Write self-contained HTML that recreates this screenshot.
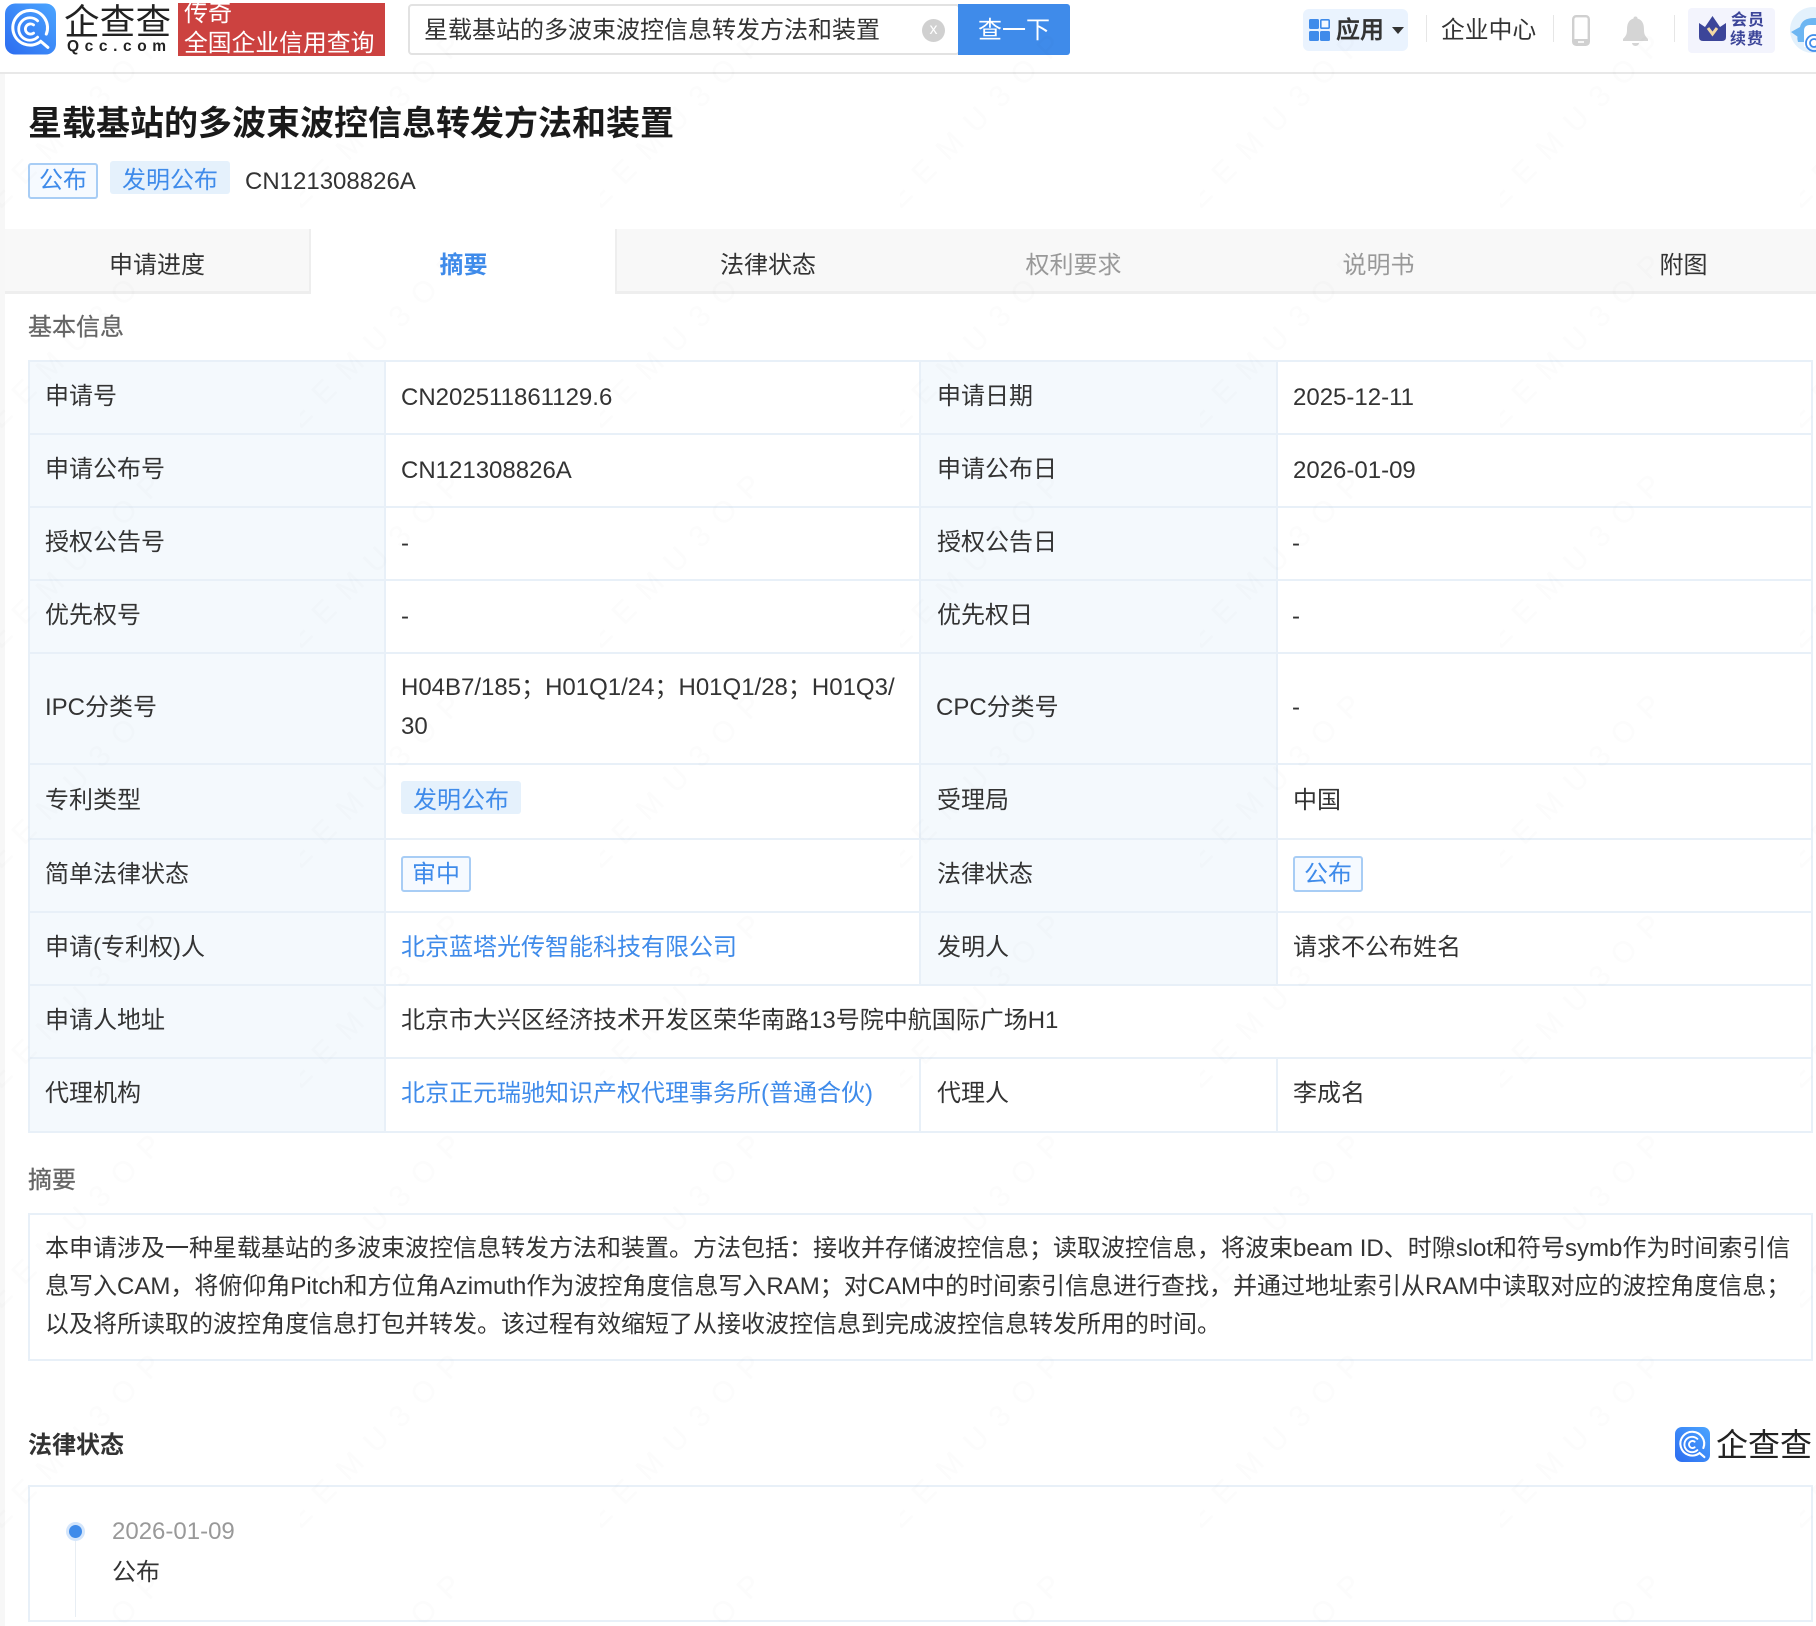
<!DOCTYPE html>
<html lang="zh"><head><meta charset="utf-8"><title>星载基站的多波束波控信息转发方法和装置</title>
<style>
html,body{margin:0;padding:0;background:#fff}
#p{position:relative;width:1816px;height:1626px;overflow:hidden;background:#fff;font-family:"Liberation Sans","Noto Sans CJK SC",sans-serif;font-size:24px;color:#333}
.t{position:absolute;white-space:nowrap;line-height:38px;height:38px}
.b{position:absolute;box-sizing:border-box}
.bl{color:#3f8bea}
.tab{position:absolute;top:229px;height:65px;width:305px;box-sizing:border-box;background:#f8f8f8;border-bottom:3px solid #eee;text-align:center;line-height:74px}
.o{position:absolute;box-sizing:border-box;background:#f6faff;border:2px solid #a8cdf5;border-radius:3px;color:#3f8bea;text-align:center;width:70px;height:36px;line-height:33px}
.f{position:absolute;box-sizing:border-box;background:#e5f1fc;border-radius:3px;color:#3f8bea;text-align:center;width:120px;height:33px;line-height:40px;overflow:visible}
</style></head><body><div id="p">

<div class="b" style="left:0;top:74px;width:5px;height:1552px;background:#f7f7f7"></div>
<div class="b" style="left:0;top:72px;width:1816px;height:2px;background:#e8e8e8"></div>

<svg class="b" style="left:5px;top:3px" width="51" height="52" viewBox="0 0 100 100">
<defs><linearGradient id="g" x1="0" y1="1" x2="1" y2="0"><stop offset="0" stop-color="#2c6cf0"/><stop offset="1" stop-color="#4ba5ff"/></linearGradient></defs>
<rect width="100" height="100" rx="20" fill="url(#g)"/>
<g fill="none" stroke="#fff" stroke-linecap="round"><path stroke-width="6" d="M68 76A34 34 0 1 1 81 60M70 74L84 86"/><path stroke-width="5.5" d="M64 66A22 22 0 1 1 64 34"/><path stroke-width="5.5" d="M56 58A10 10 0 1 1 56 42"/></g></svg>
<div class="t" style="left:64px;top:2px;font-size:35.5px;line-height:40px;height:40px;color:#222;letter-spacing:.3px">企查查</div>
<div class="t" style="left:67px;top:36px;font-size:15.5px;line-height:22px;height:22px;font-weight:bold;color:#222;letter-spacing:5.6px">Qcc.com</div>

<div class="b" style="left:178px;top:3px;width:207px;height:53px;background:#cc4240;overflow:hidden;color:#fff">
<div class="t" style="left:6px;top:-8px">传奇</div><div class="t" style="left:6px;top:22px;font-size:23.8px">全国企业信用查询</div></div>

<div class="b" style="left:408px;top:4px;width:552px;height:51px;border:2px solid #e2e2e2;border-radius:4px"></div>
<div class="t" style="left:424px;top:12px;font-size:24px">星载基站的多波束波控信息转发方法和装置</div>
<div class="b" style="left:922px;top:19px;width:23px;height:23px;border-radius:50%;background:#d0d0d0;color:#fff;text-align:center;font-size:16px;line-height:22px">x</div>
<div class="b" style="left:958px;top:4px;width:112px;height:51px;background:#3f8bea;border-radius:0 3px 3px 0;color:#fff;text-align:center;line-height:54px;font-size:24px">查一下</div>

<div class="b" style="left:1303px;top:9px;width:105px;height:42px;background:#eaf3fe;border-radius:6px"></div>
<svg class="b" style="left:1309px;top:19px" width="21" height="22" viewBox="0 0 21 22"><rect width="10" height="10" rx="1.5" fill="#3f8bea"/><rect x="11.8" y=".8" width="8.4" height="8.4" rx="1" fill="#f4f9ff" stroke="#3f8bea" stroke-width="1.6"/><rect y="12" width="10" height="10" rx="1.5" fill="#3f8bea"/><rect x="11" y="12" width="10" height="10" rx="1.5" fill="#3f8bea"/></svg>
<div class="t" style="left:1336px;top:12px;font-size:24px;font-weight:500;color:#333;-webkit-text-stroke:.4px #333">应用</div>
<div class="b" style="left:1392px;top:27px;width:0;height:0;border-left:6px solid transparent;border-right:6px solid transparent;border-top:7px solid #333"></div>
<div class="b" style="left:1426px;top:15px;width:1px;height:27px;background:#e6e6e6"></div>
<div class="t" style="left:1441px;top:12px;font-size:23.8px">企业中心</div>
<div class="b" style="left:1553px;top:15px;width:1px;height:27px;background:#e6e6e6"></div>
<svg class="b" style="left:1572px;top:15px" width="18" height="31" viewBox="0 0 18 31"><rect x="1.2" y="1.2" width="15.6" height="28.6" rx="3" fill="#fff" stroke="#d0d0d0" stroke-width="2.4"/><rect x="1" y="24" width="16" height="6" rx="2" fill="#d0d0d0"/><rect x="6" y="26.2" width="6" height="1.6" fill="#fff"/></svg>
<svg class="b" style="left:1623px;top:16px" width="25" height="30" viewBox="0 0 25 30"><path fill="#d5d5d5" d="M10.5 2.5a2 2 0 0 1 4 0C20 4 21 9 21 14c0 4 1 6 4 9v2H0v-2c3-3 4-5 4-9 0-5 1-10 6.500-11.500zM9 27h7a3.500 3 0 0 1-7 0z"/></svg>
<div class="b" style="left:1674px;top:15px;width:1px;height:27px;background:#e6e6e6"></div>
<div class="b" style="left:1688px;top:8px;width:87px;height:45px;background:#f3f4fd;border-radius:4px"></div>
<svg class="b" style="left:1699px;top:16px" width="27" height="25" viewBox="0 0 27 25"><path fill="#3c4599" d="M0 7l6 4 7.500-11 7.500 11 6-4v14q0 4-4 4H4q-4 0-4-4z"/><path fill="none" stroke="#f3d9a4" stroke-width="3" d="M9 12l4.500 6 4.500-6"/></svg>
<div class="t" style="left:1731px;top:11px;font-size:16px;line-height:20px;height:20px;font-weight:bold;color:#3c4599;letter-spacing:1px">会员</div>
<div class="t" style="left:1730px;top:30px;font-size:16px;line-height:20px;height:20px;font-weight:bold;color:#3c4599;letter-spacing:1px">续费</div>
<svg class="b" style="left:1790px;top:7px" width="26" height="46" viewBox="0 0 26 46"><circle cx="23" cy="23" r="23" fill="#e3f1fc"/><path fill="#6db6f2" d="M10 20q2-9 14-9h2v24H8q-2-6 2-15zM1 25l9-5-2 10z"/><path fill="#fff" d="M14 24q0-6 6-6h6v22H14z"/><g fill="none" stroke="#3f8bea" stroke-width="1.800"><circle cx="24" cy="36" r="4"/><circle cx="24" cy="36" r="8"/></g></svg>

<div class="t" style="left:28px;top:102px;font-size:34px;line-height:44px;height:44px;font-weight:bold;color:#1a1a1a">星载基站的多波束波控信息转发方法和装置</div>
<div class="o" style="left:28px;top:163px;line-height:32px">公布</div>
<div class="f" style="left:110px;top:161px">发明公布</div>
<div class="t" style="left:245px;top:163px">CN121308826A</div>

<div class="tab" style="left:5px;width:306px;border-right:2px solid #eee">申请进度</div>
<div class="tab bl" style="left:311px;background:#fff;border:0;font-weight:bold">摘要</div>
<div class="tab" style="left:615px;width:306px;box-shadow:inset 2px 0 0 #eee">法律状态</div>
<div class="tab" style="left:921px;color:#999">权利要求</div>
<div class="tab" style="left:1226px;color:#999">说明书</div>
<div class="tab" style="left:1531px;width:285px"><span style="position:absolute;left:0;width:305px">附图</span></div>

<div class="t" style="left:28px;top:309px;color:#666;-webkit-text-stroke:.3px #666">基本信息</div>

<!-- table -->
<div class="b" style="left:28px;top:360px;width:1785px;height:773px;border:2px solid #e8f0f8"></div>
<div class="b" style="left:30px;top:362px;width:354px;height:769px;background:#f4f9fd"></div>
<div class="b" style="left:921px;top:362px;width:355px;height:696px;background:#f4f9fd"></div>
<div class="b" style="left:384px;top:362px;width:2px;height:769px;background:#e8f0f8"></div>
<div class="b" style="left:919px;top:362px;width:2px;height:623px;background:#e8f0f8"></div>
<div class="b" style="left:919px;top:1058px;width:2px;height:73px;background:#e8f0f8"></div>
<div class="b" style="left:1276px;top:362px;width:2px;height:623px;background:#e8f0f8"></div>
<div class="b" style="left:1276px;top:1058px;width:2px;height:73px;background:#e8f0f8"></div>
<div class="b" style="left:921px;top:985px;width:355px;height:73px;background:#fff"></div>
<div class="b" style="left:30px;top:433px;width:1781px;height:2px;background:#e8f0f8"></div>
<div class="b" style="left:30px;top:506px;width:1781px;height:2px;background:#e8f0f8"></div>
<div class="b" style="left:30px;top:579px;width:1781px;height:2px;background:#e8f0f8"></div>
<div class="b" style="left:30px;top:652px;width:1781px;height:2px;background:#e8f0f8"></div>
<div class="b" style="left:30px;top:763px;width:1781px;height:2px;background:#e8f0f8"></div>
<div class="b" style="left:30px;top:838px;width:1781px;height:2px;background:#e8f0f8"></div>
<div class="b" style="left:30px;top:911px;width:1781px;height:2px;background:#e8f0f8"></div>
<div class="b" style="left:30px;top:984px;width:1781px;height:2px;background:#e8f0f8"></div>
<div class="b" style="left:30px;top:1057px;width:1781px;height:2px;background:#e8f0f8"></div>

<div class="t" style="left:45px;top:378px">申请号</div><div class="t" style="left:401px;top:379px">CN202511861129.6</div><div class="t" style="left:937px;top:378px">申请日期</div><div class="t" style="left:1293px;top:379px">2025-12-11</div>
<div class="t" style="left:45px;top:451px">申请公布号</div><div class="t" style="left:401px;top:452px">CN121308826A</div><div class="t" style="left:937px;top:451px">申请公布日</div><div class="t" style="left:1293px;top:452px">2026-01-09</div>
<div class="t" style="left:45px;top:524px">授权公告号</div><div class="t" style="left:401px;top:525px">-</div><div class="t" style="left:937px;top:524px">授权公告日</div><div class="t" style="left:1292px;top:525px">-</div>
<div class="t" style="left:45px;top:597px">优先权号</div><div class="t" style="left:401px;top:598px">-</div><div class="t" style="left:937px;top:597px">优先权日</div><div class="t" style="left:1292px;top:598px">-</div>
<div class="t" style="left:45px;top:689px">IPC分类号</div><div class="t" style="left:401px;top:669px">H04B7/185；H01Q1/24；H01Q1/28；H01Q3/</div><div class="t" style="left:401px;top:708px">30</div><div class="t" style="left:936px;top:689px">CPC分类号</div><div class="t" style="left:1292px;top:689px">-</div>
<div class="t" style="left:45px;top:782px">专利类型</div><div class="f" style="left:401px;top:781px">发明公布</div><div class="t" style="left:937px;top:782px">受理局</div><div class="t" style="left:1293px;top:782px">中国</div>
<div class="t" style="left:45px;top:856px">简单法律状态</div><div class="o" style="left:401px;top:856px">审中</div><div class="t" style="left:937px;top:856px">法律状态</div><div class="o" style="left:1293px;top:856px">公布</div>
<div class="t" style="left:45px;top:929px">申请(专利权)人</div><div class="t bl" style="left:401px;top:929px">北京蓝塔光传智能科技有限公司</div><div class="t" style="left:937px;top:929px">发明人</div><div class="t" style="left:1293px;top:929px">请求不公布姓名</div>
<div class="t" style="left:45px;top:1002px">申请人地址</div><div class="t" style="left:401px;top:1002px">北京市大兴区经济技术开发区荣华南路13号院中航国际广场H1</div>
<div class="t" style="left:45px;top:1075px">代理机构</div><div class="t bl" style="left:401px;top:1075px">北京正元瑞驰知识产权代理事务所(普通合伙)</div><div class="t" style="left:937px;top:1075px">代理人</div><div class="t" style="left:1293px;top:1075px">李成名</div>

<div class="t" style="left:28px;top:1162px;color:#666;-webkit-text-stroke:.3px #666">摘要</div>
<div class="b" style="left:28px;top:1213px;width:1785px;height:148px;border:2px solid #e8f0f8"></div>
<div class="t" style="left:45px;top:1230px">本申请涉及一种星载基站的多波束波控信息转发方法和装置。方法包括：接收并存储波控信息；读取波控信息，将波束beam ID、时隙slot和符号symb作为时间索引信</div>
<div class="t" style="left:45px;top:1268px">息写入CAM，将俯仰角Pitch和方位角Azimuth作为波控角度信息写入RAM；对CAM中的时间索引信息进行查找，并通过地址索引从RAM中读取对应的波控角度信息；</div>
<div class="t" style="left:45px;top:1306px">以及将所读取的波控角度信息打包并转发。该过程有效缩短了从接收波控信息到完成波控信息转发所用的时间。</div>

<div class="t" style="left:28px;top:1427px;font-weight:bold;color:#333">法律状态</div>
<svg class="b" style="left:1675px;top:1427px" width="35" height="35" viewBox="0 0 100 100"><rect width="100" height="100" rx="20" fill="url(#g)"/><g fill="none" stroke="#fff" stroke-linecap="round"><path stroke-width="6" d="M68 76A34 34 0 1 1 81 60M70 74L84 86"/><path stroke-width="5.500" d="M64 66A22 22 0 1 1 64 34"/><path stroke-width="5.500" d="M56 58A10 10 0 1 1 56 42"/></g></svg>
<div class="t" style="left:1716px;top:1425px;font-size:32px;line-height:40px;height:40px;color:#222">企查查</div>

<div class="b" style="left:28px;top:1485px;width:1785px;height:137px;border:2px solid #e8f0f8"></div>
<div class="b" style="left:65.500px;top:1522px;width:19px;height:19px;border-radius:50%;background:#d3e5fb"></div>
<div class="b" style="left:68.500px;top:1525px;width:13px;height:13px;border-radius:50%;background:#3f8bea"></div>
<div class="b" style="left:75px;top:1541px;width:1px;height:76px;background:#e8eef4"></div>
<div class="t" style="left:112px;top:1513px;color:#999">2026-01-09</div>
<div class="t" style="left:112px;top:1554px">公布</div>

<svg class="b" style="left:0;top:0;pointer-events:none" width="1816" height="1626"><defs><pattern id="w" width="300" height="220" patternUnits="userSpaceOnUse"><text x="0" y="210" transform="rotate(-45 0 210)" font-family="Liberation Sans" font-size="30" letter-spacing="14" fill="#000" fill-opacity=".01">EEMU3OP</text></pattern></defs><rect width="1816" height="1626" fill="url(#w)"/></svg>
</div></body></html>
